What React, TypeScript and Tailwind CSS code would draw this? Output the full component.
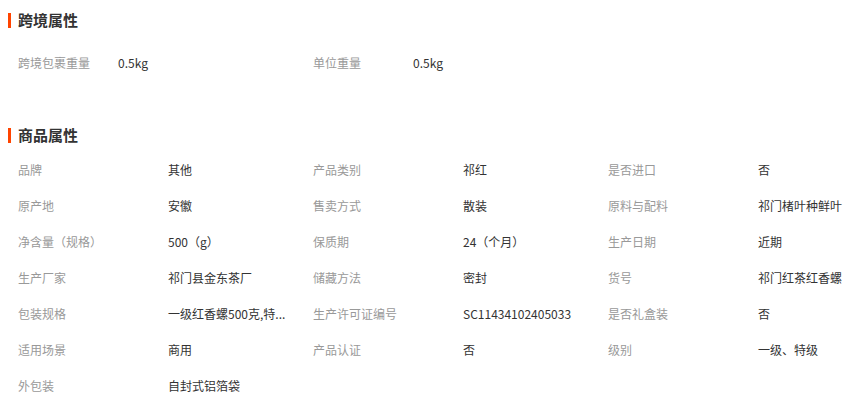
const crossBorder = [
  { label: '跨境包裹重量', value: '0.5kg' },
  { label: '单位重量', value: '0.5kg' },
];

const attrs = [
  { label: '品牌', value: '其他' },
  { label: '产品类别', value: '祁红' },
  { label: '是否进口', value: '否' },
  { label: '原产地', value: '安徽' },
  { label: '售卖方式', value: '散装' },
  { label: '原料与配料', value: '祁门楮叶种鲜叶' },
  { label: '净含量（规格）', value: '500（g）' },
  { label: '保质期', value: '24（个月）' },
  { label: '生产日期', value: '近期' },
  { label: '生产厂家', value: '祁门县金东茶厂' },
  { label: '储藏方法', value: '密封' },
  { label: '货号', value: '祁门红茶红香螺' },
  { label: '包装规格', value: '一级红香螺500克,特...' },
  { label: '生产许可证编号', value: 'SC11434102405033' },
  { label: '是否礼盒装', value: '否' },
  { label: '适用场景', value: '商用' },
  { label: '产品认证', value: '否' },
  { label: '级别', value: '一级、特级' },
  { label: '外包装', value: '自封式铝箔袋' },
];

// Section header with the orange marker
const Title = ({ text }: { text: string }) => (
  <div className="flex items-center h-[16px]">
    <span className="w-[3px] h-[15px] bg-[#ff4400] ml-[8px]" />
    <span className="ml-[7px] text-[15px] font-bold text-[#333] leading-[16px]">{text}</span>
  </div>
);

export default function App() {
  return (
    <div
      className="w-[857px] h-[406px] bg-white overflow-hidden"
      style={{ fontFamily: '"Noto Sans CJK SC", "Liberation Sans", sans-serif' }}
    >
      <div className="pt-[12px]">
        <Title text="跨境属性" />
      </div>
      <div className="grid grid-cols-[295px_295px_267px] pl-[18px] mt-[27px]">
        {crossBorder.map((a) => (
          <div key={a.label} className="flex items-center h-[16px] text-[12px]">
            <span className="w-[100px] shrink-0 text-[#999]">{a.label}</span>
            <span className="text-[#333]">{a.value}</span>
          </div>
        ))}
      </div>
      <div className="mt-[56px]">
        <Title text="商品属性" />
      </div>
      <div className="grid grid-cols-[295px_295px_249px] pl-[18px] mt-[19px] gap-y-[20px]">
        {attrs.map((a) => (
          <div key={a.label} className="flex items-center h-[16px] text-[12px]">
            <span className="w-[150px] shrink-0 text-[#999] whitespace-nowrap">{a.label}</span>
            <span className="text-[#333] whitespace-nowrap">{a.value}</span>
          </div>
        ))}
      </div>
    </div>
  );
}
